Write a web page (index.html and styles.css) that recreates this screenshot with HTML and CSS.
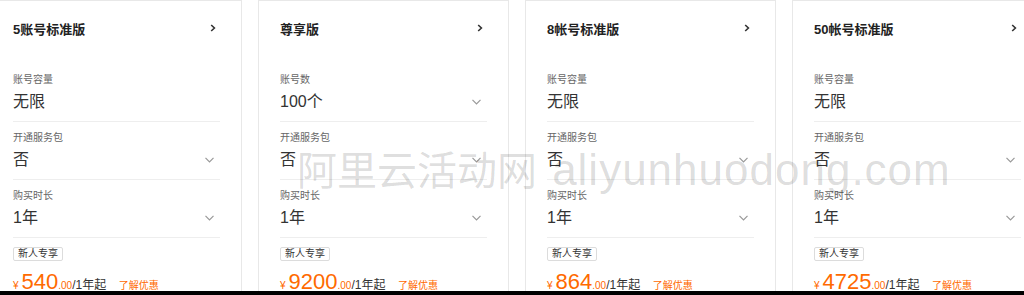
FILE: index.html
```html
<!DOCTYPE html>
<html lang="zh-CN">
<head>
  <meta charset="UTF-8" />
  <meta name="viewport" content="width=device-width, initial-scale=1.0"/>
  <title>套餐选择</title>
  <link rel="stylesheet" href="styles.css">
</head>
<body>

  <div class="stage">
    <div class="cards">

      <div class="card">
        <div class="card-head">
          <span class="card-title">5账号标准版</span>
          <svg class="arrow-right" viewBox="0 0 6 8"><path d="M1.2 1 L4.4 4 L1.2 7"/></svg>
        </div>
        <div class="field">
          <div class="field-label">账号容量</div>
          <div class="field-value">无限</div>
        </div>
        <div class="field">
          <div class="field-label">开通服务包</div>
          <div class="field-value">否<svg class="arrow-down" viewBox="0 0 9 6"><path d="M0.5 0.8 L4.5 4.8 L8.5 0.8"/></svg></div>
        </div>
        <div class="field">
          <div class="field-label">购买时长</div>
          <div class="field-value">1年<svg class="arrow-down" viewBox="0 0 9 6"><path d="M0.5 0.8 L4.5 4.8 L8.5 0.8"/></svg></div>
        </div>
        <span class="tag">新人专享</span>
        <div class="price">
          <span class="yen">¥</span><span class="num">540</span><span class="cents">.00</span><span class="unit">/1年起</span>
          <a class="promo">了解优惠</a>
        </div>
      </div>

      <div class="card">
        <div class="card-head">
          <span class="card-title">尊享版</span>
          <svg class="arrow-right" viewBox="0 0 6 8"><path d="M1.2 1 L4.4 4 L1.2 7"/></svg>
        </div>
        <div class="field">
          <div class="field-label">账号数</div>
          <div class="field-value">100个<svg class="arrow-down" viewBox="0 0 9 6"><path d="M0.5 0.8 L4.5 4.8 L8.5 0.8"/></svg></div>
        </div>
        <div class="field">
          <div class="field-label">开通服务包</div>
          <div class="field-value">否<svg class="arrow-down" viewBox="0 0 9 6"><path d="M0.5 0.8 L4.5 4.8 L8.5 0.8"/></svg></div>
        </div>
        <div class="field">
          <div class="field-label">购买时长</div>
          <div class="field-value">1年<svg class="arrow-down" viewBox="0 0 9 6"><path d="M0.5 0.8 L4.5 4.8 L8.5 0.8"/></svg></div>
        </div>
        <span class="tag">新人专享</span>
        <div class="price">
          <span class="yen">¥</span><span class="num">9200</span><span class="cents">.00</span><span class="unit">/1年起</span>
          <a class="promo">了解优惠</a>
        </div>
      </div>

      <div class="card">
        <div class="card-head">
          <span class="card-title">8帐号标准版</span>
          <svg class="arrow-right" viewBox="0 0 6 8"><path d="M1.2 1 L4.4 4 L1.2 7"/></svg>
        </div>
        <div class="field">
          <div class="field-label">账号容量</div>
          <div class="field-value">无限</div>
        </div>
        <div class="field">
          <div class="field-label">开通服务包</div>
          <div class="field-value">否<svg class="arrow-down" viewBox="0 0 9 6"><path d="M0.5 0.8 L4.5 4.8 L8.5 0.8"/></svg></div>
        </div>
        <div class="field">
          <div class="field-label">购买时长</div>
          <div class="field-value">1年<svg class="arrow-down" viewBox="0 0 9 6"><path d="M0.5 0.8 L4.5 4.8 L8.5 0.8"/></svg></div>
        </div>
        <span class="tag">新人专享</span>
        <div class="price">
          <span class="yen">¥</span><span class="num">864</span><span class="cents">.00</span><span class="unit">/1年起</span>
          <a class="promo">了解优惠</a>
        </div>
      </div>

      <div class="card">
        <div class="card-head">
          <span class="card-title">50帐号标准版</span>
          <svg class="arrow-right" viewBox="0 0 6 8"><path d="M1.2 1 L4.4 4 L1.2 7"/></svg>
        </div>
        <div class="field">
          <div class="field-label">账号容量</div>
          <div class="field-value">无限</div>
        </div>
        <div class="field">
          <div class="field-label">开通服务包</div>
          <div class="field-value">否<svg class="arrow-down" viewBox="0 0 9 6"><path d="M0.5 0.8 L4.5 4.8 L8.5 0.8"/></svg></div>
        </div>
        <div class="field">
          <div class="field-label">购买时长</div>
          <div class="field-value">1年<svg class="arrow-down" viewBox="0 0 9 6"><path d="M0.5 0.8 L4.5 4.8 L8.5 0.8"/></svg></div>
        </div>
        <span class="tag">新人专享</span>
        <div class="price">
          <span class="yen">¥</span><span class="num">4725</span><span class="cents">.00</span><span class="unit">/1年起</span>
          <a class="promo">了解优惠</a>
        </div>
      </div>

    </div>

    <!-- site watermark -->
    <div class="watermark">阿里云活动网 <span class="wm-latin">aliyunhuodong.com</span></div>
  </div>

  <div class="bottom-bar"></div>

</body>
</html>
```

FILE: styles.css
```css
body {
  margin: 0;
  font-family: 'Liberation Sans', 'Noto Sans CJK SC', sans-serif;
  background: #fff;
  color: #333;
  overflow: hidden;
}

.stage {
  position: relative;
  height: 291px;
  overflow: hidden;
}

.cards {
  display: flex;
  gap: 16px;
  margin-left: -9px;
}

.card {
  flex: 0 0 251px;
  box-sizing: border-box;
  height: 320px;
  padding: 17px 21px 0;
  border: 1px solid #e8e8e8;
  background: #fff;
}

.card-head {
  display: flex;
  justify-content: space-between;
  align-items: center;
  height: 20px;
  margin-bottom: 26px;
}

.card-title {
  font-size: 13px;
  font-weight: bold;
  color: #222;
}

.arrow-right {
  width: 6px;
  height: 8px;
  margin-right: 4px;
  fill: none;
  stroke: #333;
  stroke-width: 1.6;
}

.field {
  padding: 9px 0 8px;
  border-bottom: 1px solid #eeeeee;
}

.field-label {
  font-size: 10px;
  line-height: 14px;
  color: #666;
}

.field-value {
  display: flex;
  justify-content: space-between;
  align-items: center;
  margin-top: 4px;
  font-size: 16px;
  line-height: 22px;
  color: #333;
}

.arrow-down {
  width: 9px;
  height: 6px;
  margin-right: 6px;
  fill: none;
  stroke: #999;
  stroke-width: 1.2;
}

.tag {
  display: inline-block;
  margin-top: 9px;
  padding: 0 4px;
  font-size: 10px;
  line-height: 12px;
  color: #333;
  border: 1px solid #dcdcdc;
  border-radius: 2px;
}

.price {
  margin-top: 7px;
  line-height: 28px;
  color: #ff6a00;
  white-space: nowrap;
}

.yen {
  font-size: 10px;
  margin-right: 3px;
}

.num {
  font-size: 22px;
}

.cents {
  font-size: 10px;
}

.unit {
  font-size: 12px;
  color: #333;
}

.promo {
  margin-left: 8px;
  font-size: 10px;
  color: #ff6a00;
}

.watermark {
  position: absolute;
  left: 297px;
  top: 146px;
  font-size: 40px;
  line-height: 48px;
  color: rgba(0, 0, 0, 0.14);
  white-space: nowrap;
  pointer-events: none;
}

.wm-latin {
  font-size: 44px;
  letter-spacing: 1px;
  margin-left: 4px;
}

.bottom-bar {
  height: 4px;
  background: #000;
}
```
